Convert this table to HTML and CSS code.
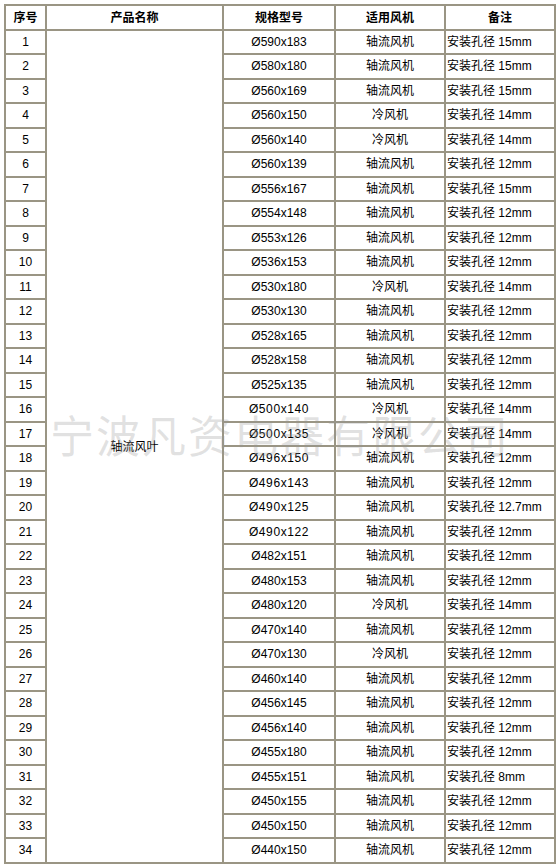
FILE: index.html
```html
<!DOCTYPE html>
<html lang="zh">
<head>
<meta charset="utf-8">
<link rel="stylesheet" href="styles.css">
</head>
<body>
<div class="wrap">
<table class="spec">
<colgroup>
<col class="c-no"><col class="c-name"><col class="c-size"><col class="c-fan"><col class="c-note">
</colgroup>
<thead>
<tr><th>序号</th><th>产品名称</th><th>规格型号</th><th>适用风机</th><th>备注</th></tr>
</thead>
<tbody>
<tr><td>1</td><td class="name" rowspan="34">轴流风叶</td><td>Ø590x183</td><td>轴流风机</td><td class="note">安装孔径 15mm</td></tr>
<tr><td>2</td><td>Ø580x180</td><td>轴流风机</td><td class="note">安装孔径 15mm</td></tr>
<tr><td>3</td><td>Ø560x169</td><td>轴流风机</td><td class="note">安装孔径 15mm</td></tr>
<tr><td>4</td><td>Ø560x150</td><td>冷风机</td><td class="note">安装孔径 14mm</td></tr>
<tr><td>5</td><td>Ø560x140</td><td>冷风机</td><td class="note">安装孔径 14mm</td></tr>
<tr><td>6</td><td>Ø560x139</td><td>轴流风机</td><td class="note">安装孔径 12mm</td></tr>
<tr><td>7</td><td>Ø556x167</td><td>轴流风机</td><td class="note">安装孔径 15mm</td></tr>
<tr><td>8</td><td>Ø554x148</td><td>轴流风机</td><td class="note">安装孔径 12mm</td></tr>
<tr><td>9</td><td>Ø553x126</td><td>轴流风机</td><td class="note">安装孔径 12mm</td></tr>
<tr><td>10</td><td>Ø536x153</td><td>轴流风机</td><td class="note">安装孔径 12mm</td></tr>
<tr><td>11</td><td>Ø530x180</td><td>冷风机</td><td class="note">安装孔径 14mm</td></tr>
<tr><td>12</td><td>Ø530x130</td><td>轴流风机</td><td class="note">安装孔径 12mm</td></tr>
<tr><td>13</td><td>Ø528x165</td><td>轴流风机</td><td class="note">安装孔径 12mm</td></tr>
<tr><td>14</td><td>Ø528x158</td><td>轴流风机</td><td class="note">安装孔径 12mm</td></tr>
<tr><td>15</td><td>Ø525x135</td><td>轴流风机</td><td class="note">安装孔径 12mm</td></tr>
<tr><td>16</td><td class="wide">Ø500x140</td><td>冷风机</td><td class="note">安装孔径 14mm</td></tr>
<tr><td>17</td><td class="wide">Ø500x135</td><td>冷风机</td><td class="note">安装孔径 14mm</td></tr>
<tr><td>18</td><td class="wide">Ø496x150</td><td>轴流风机</td><td class="note">安装孔径 12mm</td></tr>
<tr><td>19</td><td class="wide">Ø496x143</td><td>轴流风机</td><td class="note">安装孔径 12mm</td></tr>
<tr><td>20</td><td class="wide">Ø490x125</td><td>轴流风机</td><td class="note">安装孔径 12.7mm</td></tr>
<tr><td>21</td><td class="wide">Ø490x122</td><td>轴流风机</td><td class="note">安装孔径 12mm</td></tr>
<tr><td>22</td><td>Ø482x151</td><td>轴流风机</td><td class="note">安装孔径 12mm</td></tr>
<tr><td>23</td><td>Ø480x153</td><td>轴流风机</td><td class="note">安装孔径 12mm</td></tr>
<tr><td>24</td><td>Ø480x120</td><td>冷风机</td><td class="note">安装孔径 14mm</td></tr>
<tr><td>25</td><td>Ø470x140</td><td>轴流风机</td><td class="note">安装孔径 12mm</td></tr>
<tr><td>26</td><td>Ø470x130</td><td>冷风机</td><td class="note">安装孔径 12mm</td></tr>
<tr><td>27</td><td>Ø460x140</td><td>轴流风机</td><td class="note">安装孔径 12mm</td></tr>
<tr><td>28</td><td>Ø456x145</td><td>轴流风机</td><td class="note">安装孔径 12mm</td></tr>
<tr><td>29</td><td>Ø456x140</td><td>轴流风机</td><td class="note">安装孔径 12mm</td></tr>
<tr><td>30</td><td>Ø455x180</td><td>轴流风机</td><td class="note">安装孔径 12mm</td></tr>
<tr><td>31</td><td>Ø455x151</td><td>轴流风机</td><td class="note">安装孔径 8mm</td></tr>
<tr><td>32</td><td>Ø450x155</td><td>轴流风机</td><td class="note">安装孔径 12mm</td></tr>
<tr><td>33</td><td>Ø450x150</td><td>轴流风机</td><td class="note">安装孔径 12mm</td></tr>
<tr><td>34</td><td>Ø440x150</td><td>轴流风机</td><td class="note">安装孔径 12mm</td></tr>
</tbody>
</table>
<div class="watermark">宁波凡资电器有限公司</div>
</div>
</body>
</html>
```

FILE: styles.css
```css
html, body {
  margin: 0;
  padding: 0;
  background: #fff;
}
body {
  font-family: "Liberation Sans", Arial, "Noto Sans CJK SC", sans-serif;
  font-size: 12px;
  color: #000;
}
.wrap {
  position: relative;
  padding: 4px 0 0 4px;
  width: 556px;
}
.spec {
  border-collapse: collapse;
  table-layout: fixed;
  width: 550px;
  border: 2px solid #9a9584;
}
.c-no { width: 41px; }
.c-name { width: 177px; }
.c-size { width: 112px; }
.c-fan { width: 110px; }
.c-note { width: 110px; }
.spec th, .spec td {
  border: 2px solid #9a9584;
  height: 22.5px;
  padding: 0 1px;
  text-align: center;
  vertical-align: middle;
  white-space: nowrap;
  overflow: hidden;
  line-height: 14px;
}
.spec th {
  font-family: "Noto Sans CJK SC", sans-serif;
  font-weight: bold;
  font-size: 12px;
}
.spec td.name {
  font-family: "Noto Sans CJK SC", sans-serif;
  font-size: 12px;
}
.spec td.note {
  text-align: left;
  padding-left: 1px;
}
.spec td.wide {
  letter-spacing: 0.6px;
}
.watermark {
  position: absolute;
  left: 50px;
  top: 410px;
  font-family: "Noto Sans CJK SC", sans-serif;
  font-size: 44px;
  letter-spacing: 2px;
  color: rgba(150, 150, 150, 0.28);
  white-space: nowrap;
  pointer-events: none;
  line-height: 48px;
}
```
